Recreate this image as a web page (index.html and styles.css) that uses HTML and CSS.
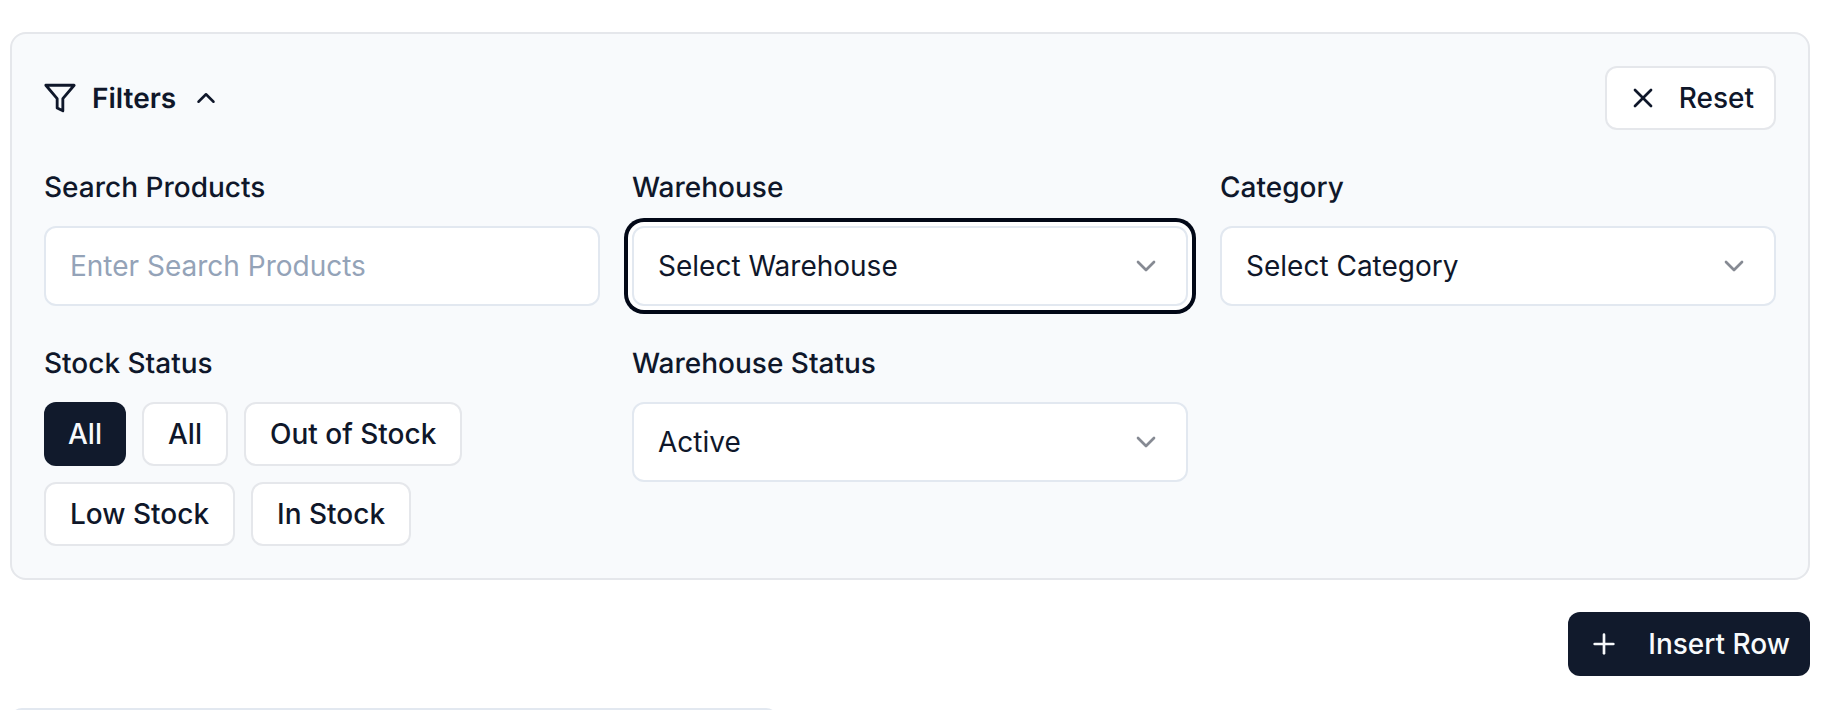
FILE: index.html
```html
<!DOCTYPE html>
<html lang="en">
<head>
<meta charset="UTF-8">
<meta name="viewport" content="width=device-width, initial-scale=1.0">
<title>Inventory Filters</title>
<link rel="stylesheet" href="styles.css">
</head>
<body>
  <main class="page">
    <section class="filters-panel">
      <div class="filters-header">
        <div class="filters-title">
          <svg class="icon icon-filter" viewBox="0 0 24 24"><polygon points="22 3 2 3 10 12.46 10 19 14 21 14 12.46 22 3"/></svg>
          <span>Filters</span>
          <svg class="icon icon-toggle" viewBox="0 0 24 24"><path d="m18 15-6-6-6 6"/></svg>
        </div>
        <button class="btn btn-reset">
          <svg class="icon" viewBox="0 0 24 24"><path d="M18 6 6 18"/><path d="m6 6 12 12"/></svg>
          Reset
        </button>
      </div>

      <div class="filters-grid">
        <div class="field">
          <label class="field-label">Search Products</label>
          <input class="text-input" type="text" placeholder="Enter Search Products">
        </div>
        <div class="field">
          <label class="field-label">Warehouse</label>
          <button class="select-box is-focused">
            <span>Select Warehouse</span>
            <svg class="icon icon-chevron" viewBox="0 0 24 24"><path d="m6 9 6 6 6-6"/></svg>
          </button>
        </div>
        <div class="field">
          <label class="field-label">Category</label>
          <button class="select-box">
            <span>Select Category</span>
            <svg class="icon icon-chevron" viewBox="0 0 24 24"><path d="m6 9 6 6 6-6"/></svg>
          </button>
        </div>
        <div class="field">
          <label class="field-label">Stock Status</label>
          <div class="chip-group">
            <button class="btn chip is-active">All</button>
            <button class="btn chip">All</button>
            <button class="btn chip">Out of Stock</button>
            <button class="btn chip">Low Stock</button>
            <button class="btn chip">In Stock</button>
          </div>
        </div>
        <div class="field">
          <label class="field-label">Warehouse Status</label>
          <button class="select-box">
            <span>Active</span>
            <svg class="icon icon-chevron" viewBox="0 0 24 24"><path d="m6 9 6 6 6-6"/></svg>
          </button>
        </div>
      </div>
    </section>

    <div class="actions">
      <button class="btn btn-primary">
        <svg class="icon" viewBox="0 0 24 24"><path d="M5 12h14"/><path d="M12 5v14"/></svg>
        Insert Row
      </button>
    </div>

    <section class="table-card"></section>
  </main>
</body>
</html>
```

FILE: styles.css
```css
* {
  margin: 0;
  padding: 0;
  box-sizing: border-box;
}

html,
body {
  height: 100%;
  overflow: hidden;
}

body {
  font-family: Inter, 'Liberation Sans', sans-serif;
  font-size: 28px;
  font-weight: 500;
  line-height: 40px;
  color: #0f172a;
  background-color: #fff;
  text-rendering: geometricPrecision;
}

button,
input {
  font: inherit;
  color: inherit;
}

.page {
  padding: 32px 22px 0 10px;
}

.icon {
  width: 32px;
  height: 32px;
  flex-shrink: 0;
  fill: none;
  stroke: currentColor;
  stroke-width: 2;
  stroke-linecap: round;
  stroke-linejoin: round;
}

/* Filters panel */
.filters-panel {
  padding: 32px;
  background-color: #f8fafc;
  border: 2px solid #e5e7eb;
  border-radius: 16px;
}

.filters-header {
  display: flex;
  align-items: center;
  justify-content: space-between;
  margin-bottom: 37px;
}

.filters-title {
  display: flex;
  align-items: center;
  gap: 12px;
  font-weight: 600;
}

.icon-filter {
  width: 34px;
  height: 34px;
  margin-left: -1px;
  margin-right: 3px;
}

.icon-toggle {
  width: 30px;
  height: 30px;
  margin-left: 3px;
}

.filters-grid {
  display: grid;
  grid-template-columns: repeat(3, 1fr);
  gap: 37px 32px;
}

.field-label {
  display: block;
  margin-bottom: 19px;
}

.text-input,
.select-box {
  display: flex;
  align-items: center;
  justify-content: space-between;
  width: 100%;
  height: 80px;
  padding: 0 24px;
  background-color: #fff;
  border: 2px solid #e2e8f0;
  border-radius: 12px;
  font-weight: 400;
  text-align: left;
}

.text-input::placeholder {
  color: #94a3b8;
}

.select-box.is-focused {
  box-shadow: 0 0 0 4px #fff, 0 0 0 8px #020817;
}

.icon-chevron {
  opacity: 0.5;
}

/* Buttons */
.btn {
  display: inline-flex;
  align-items: center;
  height: 64px;
  padding: 0 24px;
  background-color: #fff;
  border: 2px solid #e5e7eb;
  border-radius: 12px;
  white-space: nowrap;
}

.btn-reset {
  gap: 20px;
  padding: 0 20px;
}

.chip-group {
  display: flex;
  flex-wrap: wrap;
  gap: 16px;
}

.chip.is-active {
  color: #f8fafc;
  background-color: #111a2c;
  border: none;
}

.actions {
  display: flex;
  justify-content: flex-end;
  margin-top: 32px;
}

.btn-primary {
  gap: 28px;
  padding: 0 20px;
  color: #f8fafc;
  background-color: #111a2c;
  border: none;
}

.table-card {
  width: 768px;
  height: 200px;
  margin-top: 32px;
  border: 2px solid #e2e8f0;
  border-radius: 12px;
}
```
